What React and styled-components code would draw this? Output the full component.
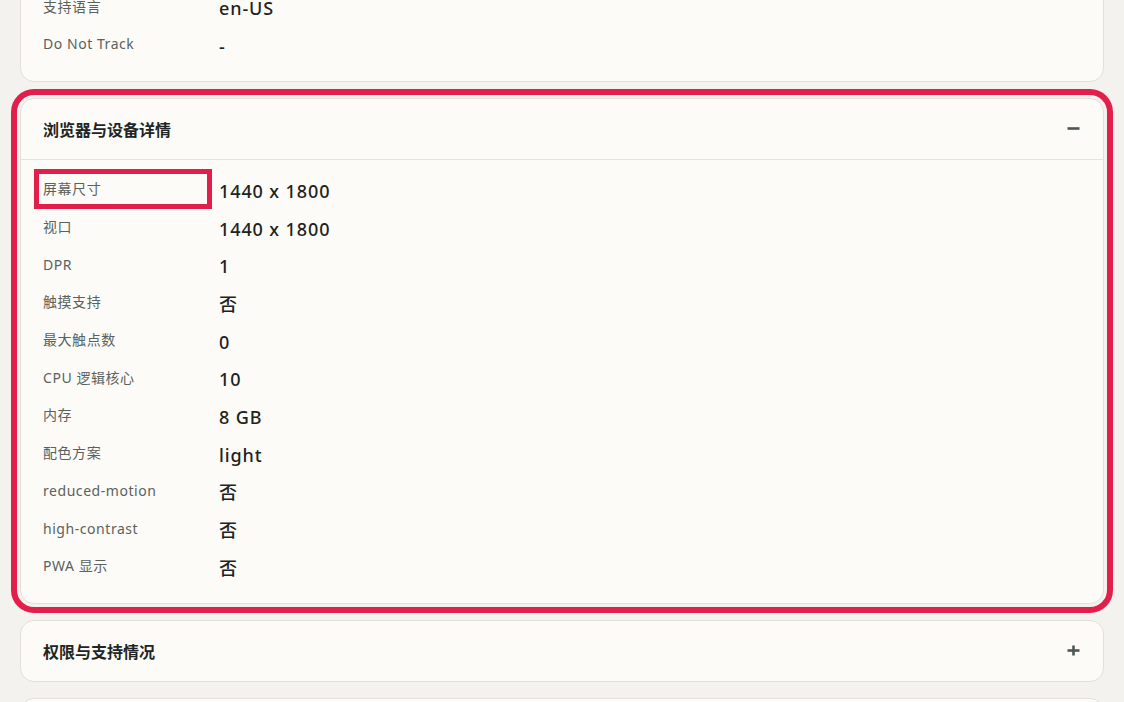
import React from "react";
import styled, { createGlobalStyle } from "styled-components";

const Global = createGlobalStyle`
  html, body { margin: 0; padding: 0; background: #f3f2ee; }
  body { font-family: "Noto Sans", "Noto Sans CJK SC", sans-serif; -webkit-font-smoothing: antialiased; }
`;

const Page = styled.div`
  margin-top: -23.7px;
  padding: 0 20px 40px;
  display: flex;
  flex-direction: column;
  gap: 16px;
`;

const Card = styled.section`
  background: #fcfbf7;
  border: 1px solid #e3e0d8;
  border-radius: 14px;
  min-height: ${(p) => (p.$stub ? "60px" : "auto")};
  outline: ${(p) => (p.$highlighted ? "6px solid #e21f4b" : "none")};
  outline-offset: 3px;
`;

const Header = styled.div`
  height: 60px;
  display: flex;
  align-items: center;
  justify-content: space-between;
  padding: 0 23px 0 22px;
  border-bottom: ${(p) => (p.$open ? "1px solid #e6e3dc" : "none")};
`;

const Title = styled.h3`
  margin: 0;
  font-family: "Noto Sans CJK SC", "Noto Sans", sans-serif;
  font-size: 16px;
  font-weight: 700;
  color: #1f2524;
  letter-spacing: 0;
`;

const Body = styled.div`
  padding: 11px 22px 17.3px;
`;

const Row = styled.div`
  display: grid;
  grid-template-columns: 160px 1fr;
  column-gap: 16px;
  align-items: center;
  height: 37.7px;
`;

const Label = styled.div`
  font-size: 14px;
  letter-spacing: 0.55px;
  color: #5a6260;
  line-height: 22px;
  margin-top: -1px;
  outline: ${(p) => (p.$marked ? "5px solid #e21f4b" : "none")};
  outline-offset: 4px;
`;

const Value = styled.div`
  font-size: 18px;
  font-weight: 500;
  letter-spacing: 0.9px;
  color: #1d2321;
  line-height: 24px;
  padding-top: 2px;
`;

const IconWrap = styled.span`
  display: flex;
  color: #4d5856;
`;

const Toggle = ({ open }) => (
  <IconWrap>
    <svg width="13" height="13" viewBox="0 0 13 13" fill="none">
      <path d="M0.5 6.5H12.5" stroke="currentColor" strokeWidth="2.6" />
      {!open && <path d="M6.5 1.5V11.5" stroke="currentColor" strokeWidth="2.6" />}
    </svg>
  </IconWrap>
);

const deviceRows = [
  ["屏幕尺寸", "1440 x 1800"],
  ["视口", "1440 x 1800"],
  ["DPR", "1"],
  ["触摸支持", "否"],
  ["最大触点数", "0"],
  ["CPU 逻辑核心", "10"],
  ["内存", "8 GB"],
  ["配色方案", "light"],
  ["reduced-motion", "否"],
  ["high-contrast", "否"],
  ["PWA 显示", "否"],
];

export default function App() {
  return (
    <>
      <Global />
      <Page>
        <Card>
          <Body>
            <Row>
              <Label>支持语言</Label>
              <Value>en-US</Value>
            </Row>
            <Row>
              <Label>Do Not Track</Label>
              <Value>-</Value>
            </Row>
          </Body>
        </Card>

        <Card $highlighted>
          <Header $open>
            <Title>浏览器与设备详情</Title>
            <Toggle open />
          </Header>
          <Body>
            {deviceRows.map(([k, v], i) => (
              <Row key={k}>
                <Label $marked={i === 0}>{k}</Label>
                <Value>{v}</Value>
              </Row>
            ))}
          </Body>
        </Card>

        <Card>
          <Header>
            <Title>权限与支持情况</Title>
            <Toggle />
          </Header>
        </Card>

        <Card $stub />
      </Page>
    </>
  );
}
